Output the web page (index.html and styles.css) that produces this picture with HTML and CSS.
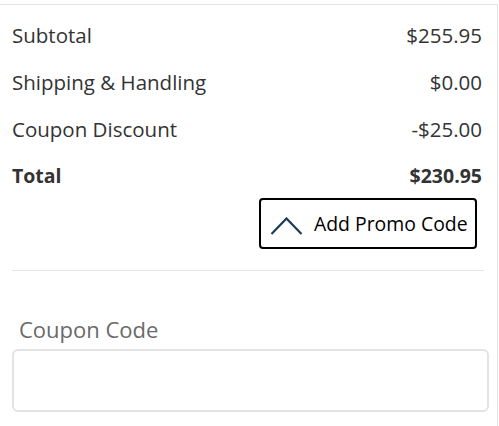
FILE: index.html
```html
<!DOCTYPE html>
<html>
<head>
<meta charset="utf-8">
<link rel="stylesheet" href="styles.css">
</head>
<body>
<div class="panel">
  <div class="summary">
    <div class="row"><span>Subtotal</span><span>$255.95</span></div>
    <div class="row"><span>Shipping &amp; Handling</span><span>$0.00</span></div>
    <div class="row"><span>Coupon Discount</span><span>-$25.00</span></div>
    <div class="row total"><span>Total</span><span>$230.95</span></div>
    <div class="promo-wrap">
      <button class="promo">
        <svg class="chev" width="33" height="18" viewBox="0 0 33 18"><polyline points="1.5,17 16.5,1.5 31.5,17" fill="none" stroke="#1d3b58" stroke-width="2.2"/></svg>
        <span>Add Promo Code</span>
      </button>
    </div>
  </div>
  <div class="sep"></div>
  <div class="coupon">
    <label class="coupon-label">Coupon Code</label>
    <div class="coupon-input"></div>
  </div>
</div>
</body>
</html>
```

FILE: styles.css
```css
html, body {
  margin: 0;
  padding: 0;
  background: #fff;
}
.panel {
  margin-top: 4px;
  width: 497px;
  height: 430px;
  border-top: 1px solid #e4e4e4;
  border-right: 1px solid #e4e4e4;
  font-family: "Open Sans", "Noto Sans", sans-serif;
  color: #333;
}
.summary {
  padding: 6px 15px 0 12px;
}
.row {
  display: flex;
  justify-content: space-between;
  font-size: 20.5px;
  line-height: 30px;
  padding: 8.5px 0;
}
.row.total {
  font-weight: 700;
  font-size: 19.5px;
}
.promo-wrap {
  display: flex;
  justify-content: flex-end;
  padding-right: 5px;
}
.promo {
  display: flex;
  align-items: center;
  gap: 11px;
  height: 51px;
  width: 218px;
  box-sizing: border-box;
  margin-top: -1px;
  border: 2px solid #000;
  border-radius: 4px;
  background: #fff;
  padding: 0 0 0 9px;
  font-family: "Open Sans", "Noto Sans", sans-serif;
  font-size: 19.4px;
  color: #000;
}
.chev {
  display: block;
  margin-top: 4px;
}
.sep {
  margin: 21px 13px 0 12px;
  height: 1px;
  background: #e6e6e6;
}
.coupon {
  padding: 43px 8px 0 12px;
}
.coupon-label {
  display: block;
  padding-left: 7px;
  font-size: 22px;
  line-height: 30px;
  color: #6a6a6a;
}
.coupon-input {
  margin-top: 5px;
  height: 63px;
  box-sizing: border-box;
  border: 2px solid #e3e3e3;
  border-radius: 6px;
}
```
